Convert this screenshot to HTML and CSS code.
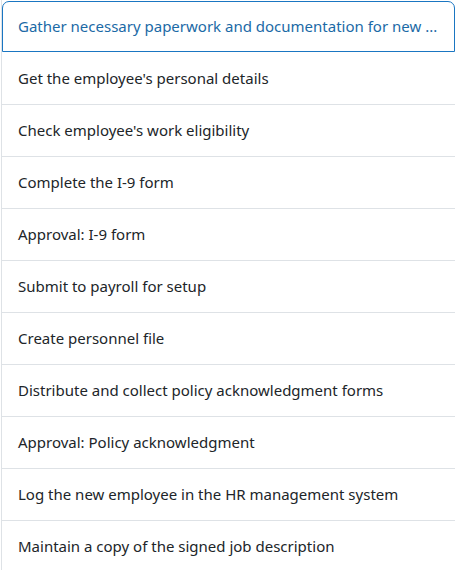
FILE: index.html
```html
<!DOCTYPE html>
<html>
<head>
<meta charset="utf-8">
<link rel="stylesheet" href="styles.css">
</head>
<body>
<ul class="list">
  <li class="item item-active"><span class="label">Gather necessary paperwork and documentation for new ...</span></li>
  <li class="item"><span class="label">Get the employee's personal details</span></li>
  <li class="item"><span class="label">Check employee's work eligibility</span></li>
  <li class="item"><span class="label">Complete the I-9 form</span></li>
  <li class="item"><span class="label">Approval: I-9 form</span></li>
  <li class="item"><span class="label">Submit to payroll for setup</span></li>
  <li class="item"><span class="label">Create personnel file</span></li>
  <li class="item"><span class="label">Distribute and collect policy acknowledgment forms</span></li>
  <li class="item"><span class="label">Approval: Policy acknowledgment</span></li>
  <li class="item"><span class="label">Log the new employee in the HR management system</span></li>
  <li class="item"><span class="label">Maintain a copy of the signed job description</span></li>
</ul>
</body>
</html>
```

FILE: styles.css
```css
html, body {
  margin: 0;
  padding: 0;
  background: #ffffff;
}
body {
  font-family: "Noto Sans", "Open Sans", sans-serif;
  font-size: 15px;
  color: #212529;
  overflow: hidden;
}
.list {
  list-style: none;
  margin: 0 0 0 1px;
  padding: 0;
  border-left: 1px solid #dee2e6;
}
.item {
  box-sizing: border-box;
  height: 52px;
  display: flex;
  align-items: center;
  padding: 0 18px 2px 16px;
  border-bottom: 1px solid #dee2e6;
}
.label {
  white-space: nowrap;
}
.item-active {
  height: 53px;
  border-bottom: none;
  padding: 1px 0;
  align-items: stretch;
}
.item-active .label {
  flex: 1;
  display: flex;
  align-items: center;
  box-sizing: border-box;
  border: 1px solid #1a76c2;
  border-radius: 7px 7px 0 0;
  padding: 0 10px 2px 15px;
  color: #1b6aa6;
  min-width: 0;
}
```
